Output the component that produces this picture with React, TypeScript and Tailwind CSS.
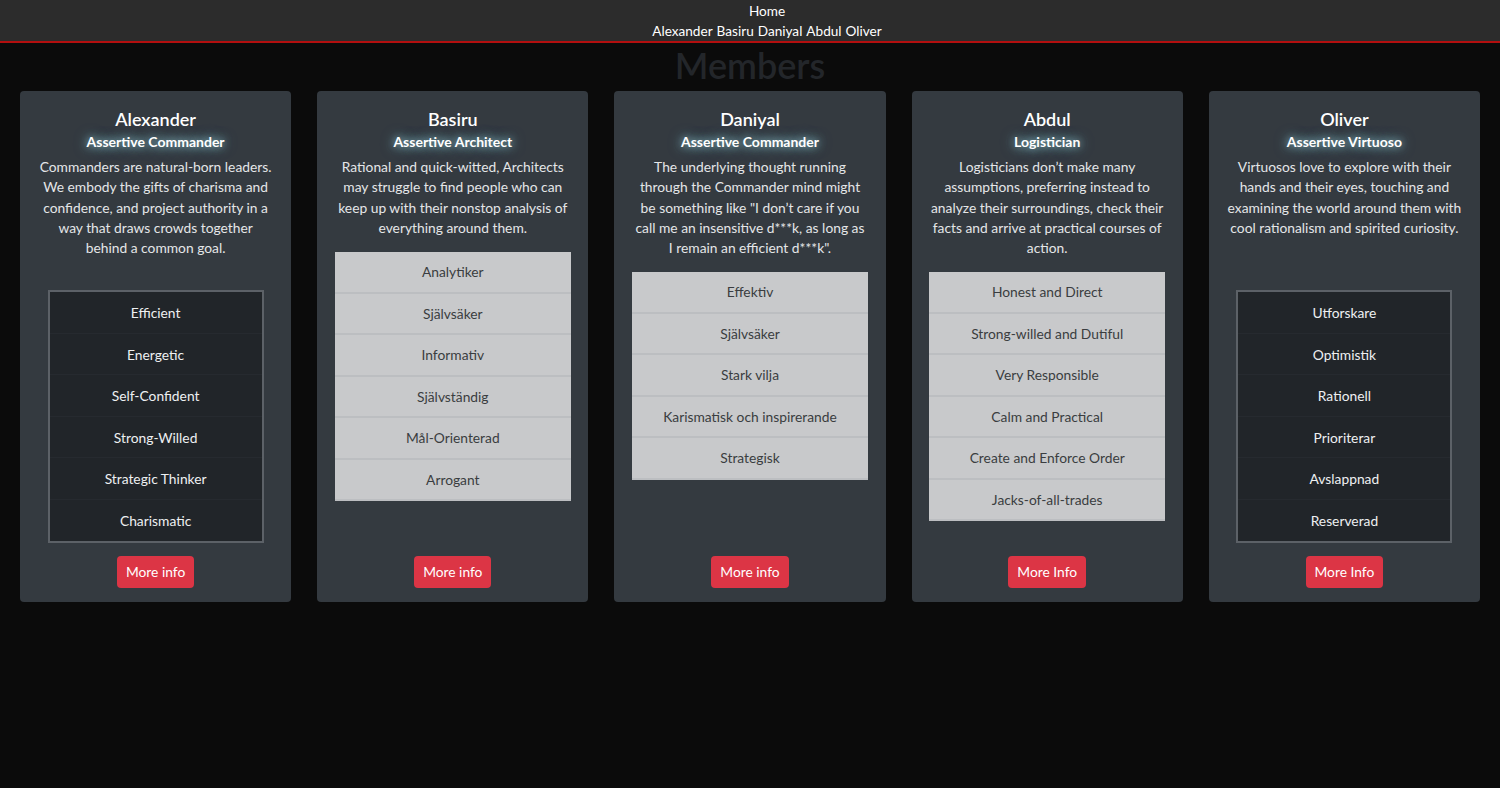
import React from 'react';

type Member = {
  name: string;
  type: string;
  text: string;
  traits: string[];
  dark: boolean;
  button: string;
  listMt: string;
};

const members: Member[] = [
  {
    name: 'Alexander',
    type: 'Assertive Commander',
    text: 'Commanders are natural-born leaders. We embody the gifts of charisma and confidence, and project authority in a way that draws crowds together behind a common goal.',
    traits: ['Efficient', 'Energetic', 'Self-Confident', 'Strong-Willed', 'Strategic Thinker', 'Charismatic'],
    dark: true,
    button: 'More info',
    listMt: 'mt-[32px]',
  },
  {
    name: 'Basiru',
    type: 'Assertive Architect',
    text: 'Rational and quick-witted, Architects may struggle to find people who can keep up with their nonstop analysis of everything around them.',
    traits: ['Analytiker', 'Självsäker', 'Informativ', 'Självständig', 'Mål-Orienterad', 'Arrogant'],
    dark: false,
    button: 'More info',
    listMt: 'mt-[14px]',
  },
  {
    name: 'Daniyal',
    type: 'Assertive Commander',
    text: 'The underlying thought running through the Commander mind might be something like "I don\u2019t care if you call me an insensitive d***k, as long as I remain an efficient d***k".',
    traits: ['Effektiv', 'Självsäker', 'Stark vilja', 'Karismatisk och inspirerande', 'Strategisk'],
    dark: false,
    button: 'More info',
    listMt: 'mt-[14px]',
  },
  {
    name: 'Abdul',
    type: 'Logistician',
    text: 'Logisticians don\u2019t make many assumptions, preferring instead to analyze their surroundings, check their facts and arrive at practical courses of action.',
    traits: ['Honest and Direct', 'Strong-willed and Dutiful', 'Very Responsible', 'Calm and Practical', 'Create and Enforce Order', 'Jacks-of-all-trades'],
    dark: false,
    button: 'More Info',
    listMt: 'mt-[14px]',
  },
  {
    name: 'Oliver',
    type: 'Assertive Virtuoso',
    text: 'Virtuosos love to explore with their hands and their eyes, touching and examining the world around them with cool rationalism and spirited curiosity.',
    traits: ['Utforskare', 'Optimistik', 'Rationell', 'Prioriterar', 'Avslappnad', 'Reserverad'],
    dark: true,
    button: 'More Info',
    listMt: 'mt-[52px]',
  },
];

const MemberCard = ({ m }: { m: Member }) => (
  <div className="flex flex-col items-center rounded bg-[#343a40] px-[18px] pt-[18px] pb-[14px] text-center">
    <h5 className="text-[18px] leading-[20px] font-semibold text-white">{m.name}</h5>
    <h6 className="mt-[3px] text-[14px] leading-[20px] font-bold text-white [text-shadow:0_0_8px_rgba(170,230,240,0.85),0_0_14px_rgba(120,200,215,0.6)]">
      {m.type}
    </h6>
    <p className="mt-[5px] text-[13.8px] leading-[20.3px] text-[#e4e6e8]">{m.text}</p>

    {/* two list styles: dark bordered, light flush */}
    {m.dark ? (
      <ul className={`${m.listMt} w-[216px] shrink-0 border-2 border-[#5c6167] bg-[#212529]`}>
        {m.traits.map((t) => (
          <li key={t} className="h-[41.5px] border-b border-[#262a2f] text-[13.8px] leading-[41px] text-[#eef0f2] last:border-b-0">
            {t}
          </li>
        ))}
      </ul>
    ) : (
      <ul className={`${m.listMt} w-[236px] shrink-0 bg-[#c8c9cb]`}>
        {m.traits.map((t) => (
          <li key={t} className="h-[41.5px] border-b-2 border-[#bcbec1] text-[13.8px] leading-[40px] text-[#3a3d40]">
            {t}
          </li>
        ))}
      </ul>
    )}

    <button className="mt-auto h-[32px] rounded bg-[#dc3545] px-[9px] text-[13.8px] text-white">{m.button}</button>
  </div>
);

export default function App() {
  return (
    <div className="min-h-[788px] bg-[#0b0b0b] font-['Lato',sans-serif]">
      <header className="border-b-2 border-[#b30f0f] bg-[#2c2c2c] pt-px pl-[34px] text-center text-[13.6px] leading-[20px] text-white">
        <div>Home</div>
        <nav className="flex justify-center gap-[4px]">
          {members.map((m) => (
            <span key={m.name}>{m.name}</span>
          ))}
        </nav>
      </header>

      <h1 className="mt-[2px] text-center text-[36px] leading-[41px] font-semibold text-[#23262a]">Members</h1>

      <main className="mt-[5px] grid h-[511px] grid-cols-5 gap-[26px] px-5">
        {members.map((m) => (
          <MemberCard key={m.name} m={m} />
        ))}
      </main>
    </div>
  );
}
